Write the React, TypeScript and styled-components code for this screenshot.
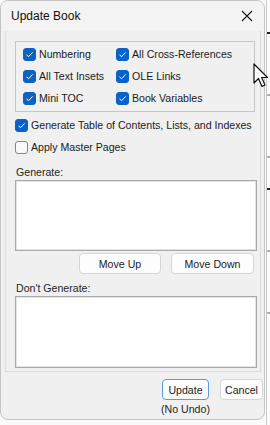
import React from "react";
import styled, { createGlobalStyle } from "styled-components";

const Global = createGlobalStyle`
  html, body { margin: 0; padding: 0; background: #fafafa; }
  body { font-family: "Liberation Sans", Arial, sans-serif; }
  * { box-sizing: border-box; }
`;

const Screen = styled.div`
  position: relative;
  width: 270px;
  height: 425px;
  overflow: hidden;
  display: flex;
  align-items: flex-start;
  background: #fafafa;
`;

const BackStrip = styled.div`
  flex: 1;
  height: 425px;
  margin-left: 1px;
  border-left: 1px solid #c9c9c9;
  background: #fbfbfb;
  display: flex;
  flex-direction: column;
`;

const BackMark = styled.div<{ $top: number; $dark?: boolean }>`
  margin-top: ${(p) => p.$top}px;
  height: 2px;
  background: ${(p) => (p.$dark ? "#222" : "#b5b5b5")};
`;

const Dialog = styled.div`
  width: 265px;
  height: 420px;
  background: #f0f0f0;
  border: 1px solid #c4c4c4;
  border-radius: 8px;
  overflow: hidden;
  display: flex;
  flex-direction: column;
  color: #1b1b1b;
`;

const TitleBar = styled.div`
  height: 30px;
  flex: none;
  display: flex;
  align-items: center;
  justify-content: space-between;
  padding: 0 6px 0 10px;
  background: #f3f3f3;
  font-size: 12px;
  color: #111;
`;

const CloseBtn = styled.div`
  width: 22px;
  height: 22px;
  display: flex;
  align-items: center;
  justify-content: center;
`;

const Body = styled.div`
  flex: 1;
  display: flex;
  flex-direction: column;
  padding: 0 3px 0 4px;
`;

const Panel = styled.div`
  border: 1px solid #dcdcdc;
  border-top: none;
  padding: 10px 4px 0 9px;
  height: 341px;
  display: flex;
  flex-direction: column;
`;

const GroupBox = styled.div`
  width: 240px;
  height: 71px;
  border: 1px solid #c6c6c6;
  display: grid;
  grid-template-columns: 93px 1fr;
  grid-template-rows: 22px 22px 22px;
  align-items: center;
  padding: 1px 0 0 7px;
`;

const CheckRow = styled.label<{ $mt?: number }>`
  display: flex;
  align-items: center;
  gap: 3px;
  font-size: 10.6px;
  line-height: 14px;
  white-space: nowrap;
  margin-top: ${(p) => p.$mt ?? 0}px;
  height: 16px;
`;

const Box = styled.span<{ $checked: boolean }>`
  width: 13px;
  height: 13px;
  flex: none;
  border-radius: 3px;
  display: inline-flex;
  align-items: center;
  justify-content: center;
  background: ${(p) => (p.$checked ? "#0a63c4" : "#f9f9f9")};
  border: 1px solid ${(p) => (p.$checked ? "#0a63c4" : "#858585")};
`;

const Label = styled.div<{ $mt: number }>`
  font-size: 10.6px;
  line-height: 14px;
  margin-top: ${(p) => p.$mt}px;
  padding-left: 1px;
  color: #1f1f1f;
`;

const ListBox = styled.div<{ $h: number }>`
  width: 242px;
  height: ${(p) => p.$h}px;
  margin-top: 1px;
  background: #fff;
  border: 1px solid #a9a9a9;
  box-shadow: inset 0 0 0 1px #e4e4e4;
`;

const ButtonRow = styled.div`
  display: flex;
  justify-content: flex-end;
  gap: 10px;
  padding-right: 2px;
  margin-top: 2px;
`;

const Button = styled.div<{ $w: number; $primary?: boolean }>`
  width: ${(p) => p.$w}px;
  height: 21px;
  flex: none;
  display: flex;
  align-items: center;
  justify-content: center;
  font-size: 10.6px;
  background: #fdfdfd;
  border: 1px solid ${(p) => (p.$primary ? "#5b9bd8" : "#d6d6d6")};
  border-radius: 4px;
  color: #1b1b1b;
`;

const Footer = styled.div`
  display: flex;
  justify-content: flex-end;
  align-items: flex-start;
  gap: 11px;
  padding: 7px 0 0 0;
  margin-right: -2px;
`;

const FooterCol = styled.div`
  width: 47px;
  display: flex;
  flex-direction: column;
  align-items: center;
  gap: 2px;
`;

const Note = styled.div`
  font-size: 10.6px;
  line-height: 14px;
  color: #1f1f1f;
  white-space: nowrap;
  flex: none;
`;

const Cursor = styled.svg`
  position: absolute;
  left: 253px;
  top: 63px;
`;

function Check({ checked, children, mt }: { checked: boolean; children: React.ReactNode; mt?: number }) {
  return (
    <CheckRow $mt={mt}>
      <Box $checked={checked}>
        {checked && (
          <svg width="9" height="9" viewBox="0 0 9 9">
            <polyline points="1.5,4.8 3.6,6.7 7.6,2.4" fill="none" stroke="#fff" strokeWidth="1" />
          </svg>
        )}
      </Box>
      <span>{children}</span>
    </CheckRow>
  );
}

export default function App() {
  return (
    <>
      <Global />
      <Screen>
        <Dialog>
          <TitleBar>
            <span>Update Book</span>
            <CloseBtn>
              <svg width="12" height="12" viewBox="0 0 12 12">
                <path d="M1 1 L11 11 M11 1 L1 11" stroke="#1a1a1a" strokeWidth="1.1" />
              </svg>
            </CloseBtn>
          </TitleBar>
          <Body>
            <Panel>
              <GroupBox>
                <Check checked>Numbering</Check>
                <Check checked>All Cross-References</Check>
                <Check checked>All Text Insets</Check>
                <Check checked>OLE Links</Check>
                <Check checked>Mini TOC</Check>
                <Check checked>Book Variables</Check>
              </GroupBox>
              <Check checked mt={5}>Generate Table of Contents, Lists, and Indexes</Check>
              <Check checked={false} mt={6}>Apply Master Pages</Check>
              <Label $mt={10}>Generate:</Label>
              <ListBox $h={71} />
              <ButtonRow>
                <Button $w={82}>Move Up</Button>
                <Button $w={83}>Move Down</Button>
              </ButtonRow>
              <Label $mt={7}>Don't Generate:</Label>
              <ListBox $h={72} />
            </Panel>
            <Footer>
              <FooterCol>
                <Button $w={47} $primary>Update</Button>
                <Note>(No Undo)</Note>
              </FooterCol>
              <Button $w={43}>Cancel</Button>
            </Footer>
          </Body>
        </Dialog>
        <BackStrip>
          <BackMark $top={32} $dark />
          <BackMark $top={60} />
          <BackMark $top={60} />
          <BackMark $top={30} $dark />
          <BackMark $top={60} />
          <BackMark $top={60} />
        </BackStrip>
        <Cursor width="16" height="26" viewBox="0 0 16 26">
          <path d="M1 1 L1 20 L5.5 15.5 L9 23.5 L12 22 L8.6 14.5 L14.5 14.5 Z" fill="#fff" stroke="#111" strokeWidth="1.2" strokeLinejoin="round" />
        </Cursor>
      </Screen>
    </>
  );
}
